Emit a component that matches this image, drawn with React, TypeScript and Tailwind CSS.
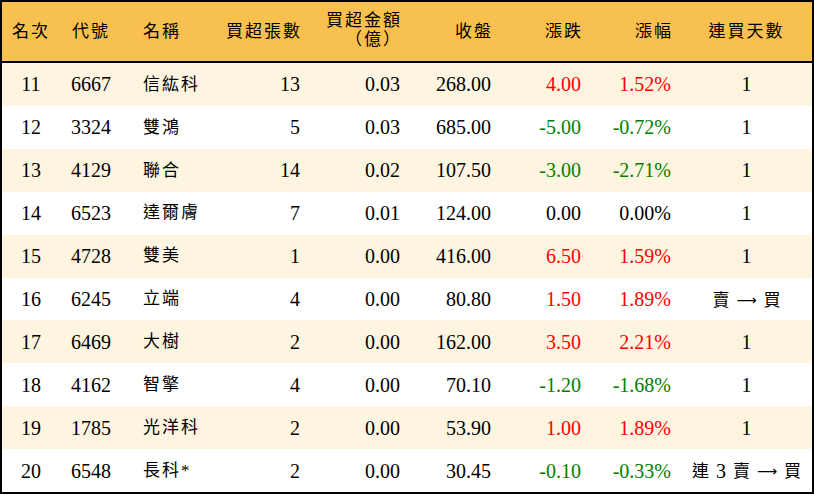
import React from "react";

type Row = {
  rank: string;
  code: string;
  name: string;
  lots: string;
  amount: string;
  close: string;
  chg: string;
  pct: string;
  days: string;
};

const rows: Row[] = [
  { rank: "11", code: "6667", name: "信紘科", lots: "13", amount: "0.03", close: "268.00", chg: "4.00", pct: "1.52%", days: "1" },
  { rank: "12", code: "3324", name: "雙鴻", lots: "5", amount: "0.03", close: "685.00", chg: "-5.00", pct: "-0.72%", days: "1" },
  { rank: "13", code: "4129", name: "聯合", lots: "14", amount: "0.02", close: "107.50", chg: "-3.00", pct: "-2.71%", days: "1" },
  { rank: "14", code: "6523", name: "達爾膚", lots: "7", amount: "0.01", close: "124.00", chg: "0.00", pct: "0.00%", days: "1" },
  { rank: "15", code: "4728", name: "雙美", lots: "1", amount: "0.00", close: "416.00", chg: "6.50", pct: "1.59%", days: "1" },
  { rank: "16", code: "6245", name: "立端", lots: "4", amount: "0.00", close: "80.80", chg: "1.50", pct: "1.89%", days: "sell" },
  { rank: "17", code: "6469", name: "大樹", lots: "2", amount: "0.00", close: "162.00", chg: "3.50", pct: "2.21%", days: "1" },
  { rank: "18", code: "4162", name: "智擎", lots: "4", amount: "0.00", close: "70.10", chg: "-1.20", pct: "-1.68%", days: "1" },
  { rank: "19", code: "1785", name: "光洋科", lots: "2", amount: "0.00", close: "53.90", chg: "1.00", pct: "1.89%", days: "1" },
  { rank: "20", code: "6548", name: "長科*", lots: "2", amount: "0.00", close: "30.45", chg: "-0.10", pct: "-0.33%", days: "streak" },
];

const grid =
  "grid grid-cols-[58px_62px_100px_88px_100px_91px_90px_90px_131px] items-center";

function colorOf(v: string) {
  if (v.startsWith("-")) return "text-[#008000]";
  if (/^0\.00/.test(v)) return "text-black";
  return "text-[#ff0000]";
}

function Arrow() {
  return (
    <span className="inline-block w-[20px] text-center text-[14px]" style={{ fontFamily: '"DejaVu Sans", sans-serif' }}>
      ⟶
    </span>
  );
}

function Days({ v }: { v: string }) {
  if (v === "1") return <span>1</span>;
  if (v === "sell")
    return (
      <span className="inline-flex items-center gap-[7px] text-[17px]">
        <span>賣</span>
        <Arrow />
        <span>買</span>
      </span>
    );
  return (
    <span className="inline-flex items-center gap-[7px] text-[17px]">
      <span>連</span>
      <span className="text-[20px]">3</span>
      <span>賣</span>
      <Arrow />
      <span>買</span>
    </span>
  );
}

export default function App() {
  return (
    <div
      className="w-[814px] h-[496px] bg-white"
      style={{ fontFamily: '"Liberation Serif", "Noto Sans CJK TC", serif' }}
    >
      <div className="w-[814px] h-[494px] border-2 border-black flex flex-col text-black">
        <div className={`${grid} h-[61px] shrink-0 bg-[#f8c14f] border-b-2 border-black text-[17px] leading-[19px] tracking-[2px]`}>
          <div className="text-center">名次</div>
          <div className="text-center">代號</div>
          <div className="pl-[21px]">名稱</div>
          <div className="text-right pr-[8px]">買超張數</div>
          <div className="text-right pr-[8px] -mt-[3px]">
            買超金額
            <br />
            （億）
          </div>
          <div className="text-right pr-[8px]">收盤</div>
          <div className="text-right pr-[8px]">漲跌</div>
          <div className="text-right pr-[8px]">漲幅</div>
          <div className="text-center">連買天數</div>
        </div>
        {rows.map((r, i) => (
          <div
            key={r.rank}
            className={`${grid} flex-1 text-[20px] ${i % 2 === 0 ? "bg-[#fef5e1]" : "bg-white"}`}
          >
            <div className="text-center">{r.rank}</div>
            <div className="text-center">{r.code}</div>
            <div className="pl-[21px] text-[17px] tracking-[2px]">{r.name}</div>
            <div className="text-right pr-[10px]">{r.lots}</div>
            <div className="text-right pr-[10px]">{r.amount}</div>
            <div className="text-right pr-[10px]">{r.close}</div>
            <div className={`text-right pr-[10px] ${colorOf(r.chg)}`}>{r.chg}</div>
            <div className={`text-right pr-[10px] ${colorOf(r.pct)}`}>{r.pct}</div>
            <div className="text-center">
              <Days v={r.days} />
            </div>
          </div>
        ))}
      </div>
    </div>
  );
}
